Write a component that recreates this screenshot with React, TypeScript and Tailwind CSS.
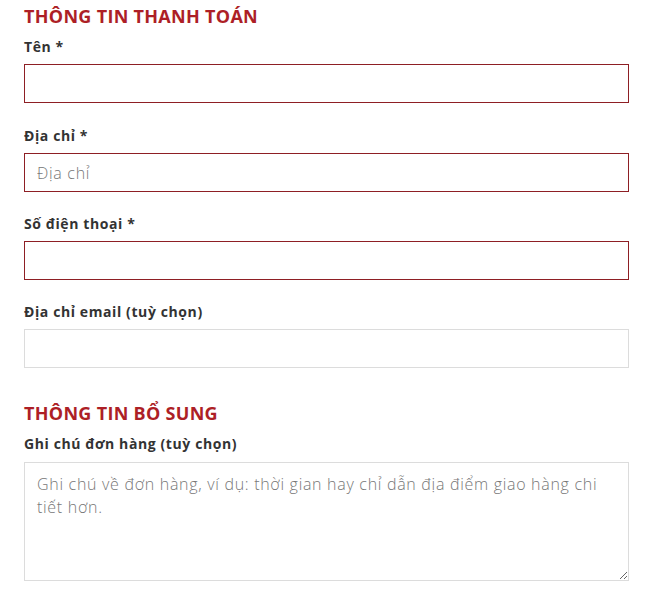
const font = { fontFamily: '"Open Sans", "Liberation Sans", sans-serif' }

const Field = ({ label, placeholder, required, gap = "mb-[22px]" }: { label: string; placeholder?: string; required?: boolean; gap?: string }) => {
    return (
        <div className={gap}>
            <label className="block text-[14px] leading-[20px] font-bold tracking-[0.6px] text-[#333] mb-[7px]">{label}</label>
            <input
                type="text"
                placeholder={placeholder}
                className={
                    "block w-full h-[39px] px-3 text-[16px] tracking-[0.7px] font-light text-[#333] placeholder:text-[#777] bg-white outline-none border " +
                    (required ? "border-[#8e1f24]" : "border-[#dcdcdc]")
                }
            />
        </div>
    )
}

export default function App() {
    return (
        <div className="bg-white min-h-[597px]" style={font}>
            <div className="ml-6 w-[605px] pt-[5px]">
                <h3 className="text-[18px] leading-[22px] font-bold tracking-[0.3px] text-[#ad1f26] mb-[10px]">THÔNG TIN THANH TOÁN</h3>
                <Field label="Tên *" required gap="mb-[23px]" />
                <Field label="Địa chỉ *" placeholder="Địa chỉ" required />
                <Field label="Số điện thoại *" required />
                <Field label="Địa chỉ email (tuỳ chọn)" />

                <h3 className="mt-[34px] text-[18px] leading-[22px] font-bold tracking-[0.3px] text-[#ad1f26] mb-[10px]">THÔNG TIN BỔ SUNG</h3>
                <label className="block text-[14px] leading-[20px] font-bold tracking-[0.6px] text-[#333] mb-[8px]">Ghi chú đơn hàng (tuỳ chọn)</label>
                <textarea
                    placeholder="Ghi chú về đơn hàng, ví dụ: thời gian hay chỉ dẫn địa điểm giao hàng chi tiết hơn."
                    className="block w-full h-[119px] px-3 py-[10px] text-[16px] leading-[23px] tracking-[0.7px] font-light text-[#333] placeholder:text-[#777] bg-white outline-none border border-[#dcdcdc]"
                />
            </div>
        </div>
    )
}
